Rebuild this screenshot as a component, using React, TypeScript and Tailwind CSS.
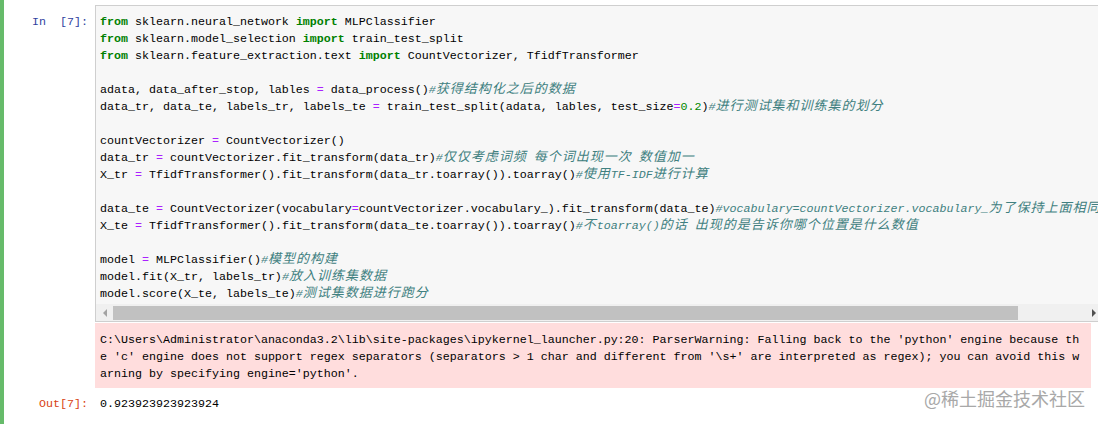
import React from 'react';

const mono = "font-['Liberation_Mono','Noto_Sans_CJK_SC',monospace] text-[11.67px] leading-[17px]";

function K({ children }: { children: React.ReactNode }) {
  return <span className="font-bold text-[#008000]">{children}</span>;
}

function O({ children }: { children: React.ReactNode }) {
  return <span className="text-[#aa22ff]">{children}</span>;
}

function N({ children }: { children: React.ReactNode }) {
  return <span className="text-[#008800]">{children}</span>;
}

// comments: cjk runs get wider glyphs like the simsun cells in the shot
function C({ text }: { text: string }) {
  const parts = text.split(/([\u3000-\u9fff\uff00-\uffef]+)/).filter((p) => p.length > 0);
  return (
    <span className="italic text-[#408080]">
      {parts.map((p, i) =>
        /[\u3000-\u9fff\uff00-\uffef]/.test(p) ? (
          <span key={i} className="font-['Noto_Sans_CJK_SC',sans-serif] text-[13px] leading-[0px] tracking-[1px]">
            {p}
          </span>
        ) : (
          <span key={i}>{p}</span>
        )
      )}
    </span>
  );
}

const lines: React.ReactNode[] = [
  <>
    <K>from</K> sklearn.neural_network <K>import</K> MLPClassifier
  </>,
  <>
    <K>from</K> sklearn.model_selection <K>import</K> train_test_split
  </>,
  <>
    <K>from</K> sklearn.feature_extraction.text <K>import</K> CountVectorizer, TfidfTransformer
  </>,
  null,
  <>
    adata, data_after_stop, lables <O>=</O> data_process()<C text="#获得结构化之后的数据" />
  </>,
  <>
    data_tr, data_te, labels_tr, labels_te <O>=</O> train_test_split(adata, lables, test_size<O>=</O>
    <N>0.2</N>)<C text="#进行测试集和训练集的划分" />
  </>,
  null,
  <>
    countVectorizer <O>=</O> CountVectorizer()
  </>,
  <>
    data_tr <O>=</O> countVectorizer.fit_transform(data_tr)<C text="#仅仅考虑词频 每个词出现一次 数值加一" />
  </>,
  <>
    X_tr <O>=</O> TfidfTransformer().fit_transform(data_tr.toarray()).toarray()<C text="#使用TF-IDF进行计算" />
  </>,
  null,
  <>
    data_te <O>=</O> CountVectorizer(vocabulary<O>=</O>countVectorizer.vocabulary_).fit_transform(data_te)
    <C text="#vocabulary=countVectorizer.vocabulary_为了保持上面相同" />
  </>,
  <>
    X_te <O>=</O> TfidfTransformer().fit_transform(data_te.toarray()).toarray()
    <C text="#不toarray()的话 出现的是告诉你哪个位置是什么数值" />
  </>,
  null,
  <>
    model <O>=</O> MLPClassifier()<C text="#模型的构建" />
  </>,
  <>
    model.fit(X_tr, labels_tr)<C text="#放入训练集数据" />
  </>,
  <>
    model.score(X_te, labels_te)<C text="#测试集数据进行跑分" />
  </>,
];

const warning = [
  "C:\\Users\\Administrator\\anaconda3.2\\lib\\site-packages\\ipykernel_launcher.py:20: ParserWarning: Falling back to the 'python' engine because th",
  "e 'c' engine does not support regex separators (separators > 1 char and different from '\\s+' are interpreted as regex); you can avoid this w",
  "arning by specifying engine='python'.",
];

function Scrollbar() {
  return (
    <div className="mt-[1px] flex h-[17px] items-center bg-[#f0f0f0]">
      <div className="flex h-[17px] w-[17px] items-center justify-center">
        <div className="h-0 w-0 border-y-[4px] border-r-[4px] border-y-transparent border-r-[#a3a3a3]" />
      </div>
      <div className="h-[14px] w-[905px] bg-[#c1c1c1]" />
      <div className="flex-1" />
      <div className="flex h-[17px] w-[17px] items-center justify-center">
        <div className="h-0 w-0 border-y-[4px] border-l-[4px] border-y-transparent border-l-[#505050]" />
      </div>
    </div>
  );
}

export default function App() {
  return (
    <div className={`relative h-[424px] w-[1098px] overflow-hidden border-l-[4px] border-[#66bb6a] bg-white pt-[5px] text-black ${mono}`}>
      <div className="flex">
        <div className="w-[91px] shrink-0 whitespace-pre pr-[7px] pt-[9px] text-right text-[#303f9f]">
          {'In\u00a0\u00a0[7]:'}
        </div>
        <div className="w-[1007px] shrink-0 border border-r-0 border-[#cfcfcf] bg-[#f7f7f7]">
          <div className="overflow-hidden whitespace-pre pl-[4px] pt-[8px]">
            {lines.map((l, i) => (
              <div key={i} className="h-[17px]">
                {l}
              </div>
            ))}
          </div>
          <Scrollbar />
        </div>
      </div>

      <div className="flex">
        <div className="w-[91px] shrink-0" />
        <div className="mt-[1px] h-[65px] w-[996px] whitespace-pre bg-[#ffdddd] pl-[5px] pt-[9px]">
          {warning.map((w, i) => (
            <div key={i}>{w}</div>
          ))}
        </div>
      </div>

      <div className="mt-[8px] flex">
        <div className="w-[91px] shrink-0 pr-[7px] text-right text-[#d84315]">Out[7]:</div>
        <div className="pl-[5px]">0.923923923923924</div>
      </div>

      <div className="absolute right-[13px] top-[387px] font-['Noto_Sans_CJK_SC',sans-serif] text-[18px] leading-[22px] text-[#a8a8a8]">
        @稀土掘金技术社区
      </div>
    </div>
  );
}
